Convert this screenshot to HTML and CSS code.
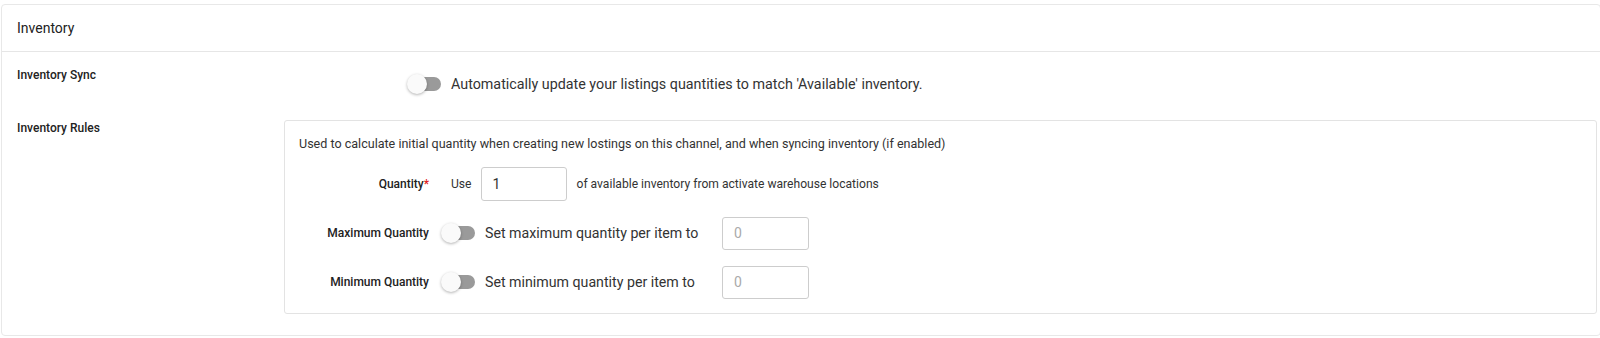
FILE: index.html
```html
<!DOCTYPE html>
<html lang="en">
<head>
  <meta charset="UTF-8">
  <meta name="viewport" content="width=device-width, initial-scale=1.0">
  <title>Inventory</title>
  <link rel="stylesheet" href="styles.css">
</head>
<body>
  <section class="card">
    <header class="card-header">Inventory</header>
    <div class="card-body">
      <div class="field">
        <div class="field-label">Inventory Sync</div>
        <div class="field-content sync">
          <span class="switch"><span class="knob"></span></span>
          <span class="switch-text">Automatically update your listings quantities to match 'Available' inventory.</span>
        </div>
      </div>
      <div class="field">
        <div class="field-label">Inventory Rules</div>
        <div class="field-content rules">
          <p class="rules-note">Used to calculate initial quantity when creating new lostings on this channel, and when syncing inventory (if enabled)</p>
          <div class="rule">
            <div class="rule-label">Quantity<span class="req">*</span></div>
            <span class="small use">Use</span>
            <input class="qty" type="text" value="1">
            <span class="small">of available inventory from activate warehouse locations</span>
          </div>
          <div class="rule">
            <div class="rule-label">Maximum Quantity</div>
            <span class="switch"><span class="knob"></span></span>
            <span class="switch-text fixed">Set maximum quantity per item to</span>
            <input class="limit" type="text" placeholder="0">
          </div>
          <div class="rule">
            <div class="rule-label">Minimum Quantity</div>
            <span class="switch"><span class="knob"></span></span>
            <span class="switch-text fixed">Set minimum quantity per item to</span>
            <input class="limit" type="text" placeholder="0">
          </div>
        </div>
      </div>
    </div>
  </section>
</body>
</html>
```

FILE: styles.css
```css
body {
  margin: 0;
  font-family: Roboto, "Liberation Sans", sans-serif;
  color: #222;
  background: #fff;
  overflow: hidden;
}
.card {
  box-sizing: border-box;
  width: 100%;
  margin: 4px 0 0 1px;
  border: 1px solid #e8e8e8;
  border-radius: 4px;
}
.card-header {
  font-size: 14px;
  line-height: 20px;
  padding: 13px 15px 13px;
  border-bottom: 1px solid #e6e6e6;
}
.card-body {
  padding: 15px 0 21px 15px;
}
.field {
  display: flex;
  align-items: flex-start;
}
.field + .field {
  margin-top: 19px;
}
.field-label {
  width: 267px;
  flex: none;
  font-size: 12px;
  font-weight: 500;
  line-height: 16px;
}
.sync {
  display: flex;
  align-items: center;
  height: 34px;
  padding-left: 123px;
}
.switch {
  position: relative;
  display: inline-block;
  width: 34px;
  height: 14px;
  flex: none;
}
.switch::before {
  content: "";
  position: absolute;
  left: 6px;
  right: 0;
  top: 0;
  bottom: 0;
  border-radius: 7px;
  background: #9a9a9a;
}
.knob {
  position: absolute;
  left: 0;
  top: -3px;
  width: 20px;
  height: 20px;
  border-radius: 50%;
  background: #fafafa;
  box-shadow: 0 1px 3px rgba(0, 0, 0, 0.3);
}
.switch-text {
  margin-left: 10px;
  font-size: 14.3px;
  color: #333;
}
.switch-text.fixed {
  font-size: 14.2px;
  width: 237px;
  flex: none;
}
.rules {
  flex: 1;
  margin-right: 3px;
  border: 1px solid #e3e3e3;
  border-radius: 3px;
  padding: 15px 14px 14px;
}
.rules-note {
  margin: 0;
  font-size: 12.55px;
  line-height: 16px;
  color: #333;
}
.rule {
  display: flex;
  align-items: center;
  height: 34px;
  margin-top: 15px;
}
.rule-label {
  width: 130px;
  margin-right: 12px;
  text-align: right;
  font-size: 12px;
  font-weight: 500;
  flex: none;
}
.req {
  color: #e02020;
}
.small {
  font-size: 12.1px;
  color: #333;
}
.use {
  margin-left: 10px;
  margin-right: 9px;
}
input {
  box-sizing: border-box;
  font-family: inherit;
  font-size: 14px;
  color: #333;
  border: 1px solid #cdcdcd;
  border-radius: 3px;
  outline: none;
  height: 34px;
  padding: 0 11px;
}
.qty {
  width: 86px;
  margin-right: 10px;
}
.limit {
  width: 87px;
  height: 33px;
}
.limit::placeholder {
  color: #aaa;
}
```
